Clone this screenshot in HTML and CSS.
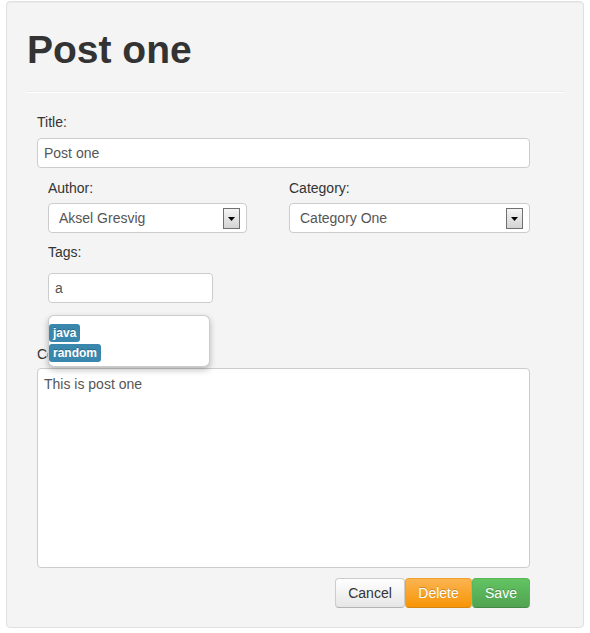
FILE: index.html
```html
<!DOCTYPE html>
<html>
<head>
<meta charset="utf-8">
<link rel="stylesheet" href="styles.css">
</head>
<body>
<div class="panel">
  <h1 class="title">Post one</h1>
  <hr class="rule">
  <form class="form">
    <label class="lbl lbl-title">Title:</label>
    <div class="field field-title">Post one</div>
    <div class="row">
      <div class="col col-author">
        <label class="lbl">Author:</label>
        <div class="field select">
          <span>Aksel Gresvig</span>
          <span class="arrow"><svg width="7" height="4" viewBox="0 0 7 4"><path d="M0 0H7L3.5 4Z" fill="#000"/></svg></span>
        </div>
      </div>
      <div class="col col-cat">
        <label class="lbl">Category:</label>
        <div class="field select">
          <span>Category One</span>
          <span class="arrow"><svg width="7" height="4" viewBox="0 0 7 4"><path d="M0 0H7L3.5 4Z" fill="#000"/></svg></span>
        </div>
      </div>
    </div>
    <div class="tags">
      <label class="lbl">Tags:</label>
      <div class="field field-tags">a</div>
      <ul class="menu">
        <li><span class="badge">java</span></li>
        <li><span class="badge">random</span></li>
      </ul>
    </div>
    <label class="lbl lbl-content">Content:</label>
    <div class="field area">This is post one</div>
    <div class="actions">
      <span class="btn btn-cancel">Cancel</span>
      <span class="btn btn-delete">Delete</span>
      <span class="btn btn-save">Save</span>
    </div>
  </form>
</div>
</body>
</html>
```
FILE: styles.css
```css
* { box-sizing: border-box; }
html, body { margin: 0; padding: 0; background: #fff; }
body {
  font-family: "Liberation Sans", Arial, sans-serif;
  font-size: 14px;
  line-height: 20px;
  color: #333;
}
.panel {
  margin: 1px 0 0 6px;
  width: 578px;
  height: 627px;
  background: #f4f4f4;
  border: 1px solid #e0e0e0;
  border-radius: 4px;
  padding: 0 19px;
  box-shadow: inset 0 1px 1px rgba(0,0,0,0.04);
}
.title {
  margin: 28px 0 0 1px;
  font-size: 39px;
  line-height: 40px;
  font-weight: bold;
  color: #333;
}
.rule {
  margin: 21px 0 0 0;
  height: 0;
  border: 0;
  border-top: 1px solid #ececec;
  border-bottom: 1px solid #ffffff;
}
.form {
  margin: 19px 0 0 11px;
  width: 493px;
  display: flex;
  flex-direction: column;
  position: relative;
}
.lbl { display: block; line-height: 20px; color: #333; }
.field {
  background: #fff;
  border: 1px solid #ccc;
  border-radius: 4px;
  height: 30px;
  color: #555;
  padding: 4px 6px;
  line-height: 20px;
}
.lbl-title { margin-bottom: 6px; }
.row {
  display: flex;
  margin: 10px 0 0 11px;
  gap: 42px;
}
.col { display: flex; flex-direction: column; gap: 5px; }
.col-author { width: 199px; }
.col-cat { width: 241px; }
.select {
  display: flex;
  align-items: center;
  justify-content: space-between;
  padding: 0 6px 0 10px;
}
.arrow {
  width: 17px;
  height: 21px;
  border: 1px solid #707070;
  background: linear-gradient(#f4f4f4, #d4d4d4);
  display: flex;
  align-items: center;
  justify-content: center;
  margin-top: 1px;
}
.tags {
  margin: 9px 0 0 11px;
  position: relative;
}
.field-tags { width: 165px; margin-top: 11px; }
.menu {
  position: absolute;
  left: 0;
  top: 73px;
  width: 162px;
  margin: 0;
  padding: 7px 0 5px 0;
  list-style: none;
  background: #fff;
  border: 1px solid rgba(0,0,0,0.2);
  border-radius: 6px;
  box-shadow: 0 3px 6px rgba(0,0,0,0.25);
  z-index: 2;
  display: flex;
  flex-direction: column;
  gap: 2px;
}
.menu li { line-height: 18px; height: 18px; }
.badge {
  display: inline-block;
  background: #3a87ad;
  color: #fff;
  font-weight: bold;
  font-size: 12px;
  line-height: 18px;
  padding: 0 4px;
  border-radius: 3px;
  text-shadow: 0 -1px 0 rgba(0,0,0,0.25);
}
.lbl-content { margin-top: 41px; margin-bottom: 4px; }
.area { height: 200px; padding: 5px 6px; }
.actions {
  display: flex;
  justify-content: flex-end;
  margin-top: 10px;
}
.btn {
  display: inline-block;
  height: 30px;
  padding: 4px 12px;
  line-height: 20px;
  font-size: 14px;
  border-radius: 4px;
  border: 1px solid rgba(0,0,0,0.12);
  text-align: center;
}
.btn-cancel {
  width: 70px;
  color: #333;
  background: linear-gradient(#ffffff, #e6e6e6);
  border-color: #ccc #ccc #b3b3b3;
}
.btn-delete {
  width: 67px;
  color: #fff;
  background: linear-gradient(#fbb450, #f89406);
  border-color: #f0a030 #f0a030 #d58512;
  text-shadow: 0 -1px 0 rgba(0,0,0,0.2);
}
.btn-save {
  width: 58px;
  color: #fff;
  background: linear-gradient(#62c462, #51a351);
  border-color: #58b558 #58b558 #448a44;
  text-shadow: 0 -1px 0 rgba(0,0,0,0.2);
}
```
